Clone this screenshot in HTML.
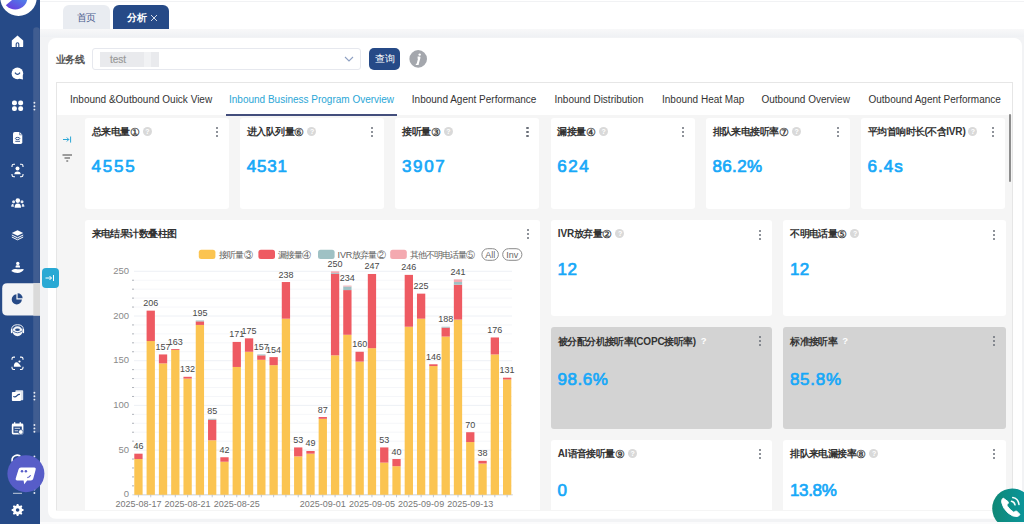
<!DOCTYPE html>
<html><head><meta charset="utf-8">
<style>
*{margin:0;padding:0;box-sizing:border-box}
html,body{width:1024px;height:524px;overflow:hidden;background:#f2f3f5;font-family:"Liberation Sans",sans-serif;position:relative}
.abs{position:absolute}
.card{position:absolute;border-radius:3px}
.ct{position:absolute;font-size:10px;letter-spacing:-0.55px;line-height:14px;font-weight:bold;color:#333;white-space:nowrap}
.num{position:absolute;font-size:17px;line-height:20px;font-weight:normal;-webkit-text-stroke:0.7px #17a8f8;color:#17a8f8;white-space:nowrap;letter-spacing:1.05px}
.qi{display:inline-block;width:9px;height:9px;border-radius:50%;background:#d9d9d9;color:#fff;font-size:7px;line-height:9px;text-align:center;vertical-align:1px;margin-left:3px;font-weight:bold}
.cd{font-size:11px;line-height:10px;font-weight:normal;-webkit-text-stroke:0.25px #333;margin-left:0px;letter-spacing:0;vertical-align:-1px}
.qw{display:inline-block;color:#fff;font-size:9.5px;margin-left:5px;font-weight:bold;vertical-align:0.5px}
.dots{position:absolute;width:3px;height:11px}
.dots i{position:absolute;left:0.1px;width:2.2px;height:2.2px;border-radius:50%}
.dots i:nth-child(1){top:0}.dots i:nth-child(2){top:4px}.dots i:nth-child(3){top:8px}
.q{position:absolute;width:9px;height:9px;border-radius:50%;color:#fff;font-size:7px;line-height:9px;text-align:center;font-weight:bold}
.tab{position:absolute;top:93px;font-size:10px;line-height:13px;color:#444;white-space:nowrap}
svg text{font-family:"Liberation Sans",sans-serif}
.ax{font-size:9.5px;fill:#8a8a8a}
.bl{font-size:9px;fill:#484848}
.dl{font-size:9px;fill:#777}
.lg{font-size:9px;fill:#606060;letter-spacing:-0.9px}
.lg2{font-size:9px;fill:#666}
</style></head><body>

<svg class="abs" style="left:0;top:0" width="40" height="524"><rect x="0" y="0" width="40" height="524" fill="#264a87"/><path d="M33.2 432.5 V30.6 A3.3 3.3 0 0 1 39.8 30.6 V432.5 Z" fill="#405d91"/><circle cx="18.5" cy="-2.3" r="18.2" fill="#fff"/><defs><linearGradient id="lg1" x1="0" y1="1" x2="1" y2="0"><stop offset="0" stop-color="#6b35dd"/><stop offset="1" stop-color="#4e86ea"/></linearGradient></defs><path d="M5.8 5.2 L13.2 -1 L27.3 -1 Q26.5 5.5 20 8.6 Q12.5 11.5 5.8 5.2 Z" fill="url(#lg1)"/><path d="M11.8 40.6 L17.5 35.6 L23.2 40.6 V46.2 Q23.2 47.1 22.3 47.1 H12.7 Q11.8 47.1 11.8 46.2 Z" fill="#ffffff"/><path d="M16.2 47.3 V44 A1.3 1.3 0 0 1 18.8 44 V47.3" fill="none" stroke="#264a87" stroke-width="1.1"/><circle cx="17.4" cy="73.4" r="5.8" fill="#ffffff"/><path d="M19.5 78.8 L23 79.5 L22.6 75.5 Z" fill="#ffffff"/><path d="M15 72.6 Q17.5 76.2 20 72.6" fill="none" stroke="#264a87" stroke-width="1.2"/><rect x="12" y="100.5" width="4.9" height="4.8" rx="2" fill="#ffffff"/><rect x="18.2" y="100.5" width="4.9" height="4.8" rx="2" fill="#ffffff"/><rect x="12" y="106.2" width="4.9" height="4.8" rx="2" fill="#ffffff"/><rect x="18.2" y="106.2" width="4.9" height="4.8" rx="2" fill="#ffffff"/><path d="M14.8 132 H19.6 L22.3 134.8 V142.3 Q22.3 144 20.6 144 H14.8 Q13 144 13 142.3 V133.8 Q13 132 14.8 132 Z" fill="#ffffff"/><path d="M19.6 132 V134.8 H22.3" fill="none" stroke="#264a87" stroke-width="0.6"/><ellipse cx="17.6" cy="138.5" rx="2.2" ry="1.1" fill="none" stroke="#264a87" stroke-width="0.9"/><path d="M15.3 141.3 H20" stroke="#264a87" stroke-width="0.9"/><path d="M12 167 V166 Q12 164.3 13.7 164.3 H15 M20 164.3 H21.3 Q23 164.3 23 166 V167 M23 174 V175 Q23 176.7 21.3 176.7 H20 M15 176.7 H13.7 Q12 176.7 12 175 V174" fill="none" stroke="#ffffff" stroke-width="1.1"/><circle cx="17.5" cy="168.6" r="2" fill="#ffffff"/><path d="M14.3 174.3 Q14.3 171.4 17.5 171.4 Q20.7 171.4 20.7 174.3 Z" fill="#ffffff"/><circle cx="17.8" cy="200.6" r="2.3" fill="#ffffff"/><path d="M14.6 207.8 Q14.6 203.6 17.8 203.6 Q21 203.6 21 207.8 Z" fill="#ffffff"/><circle cx="13.6" cy="201.8" r="1.5" fill="#ffffff" opacity="0.9"/><path d="M11.2 206.8 Q11.2 203.8 13.3 203.8 L14 206.8 Z" fill="#ffffff" opacity="0.9"/><circle cx="22" cy="201.8" r="1.5" fill="#ffffff" opacity="0.9"/><path d="M24.4 206.8 Q24.4 203.8 22.3 203.8 L21.6 206.8 Z" fill="#ffffff" opacity="0.9"/><path d="M11.8 233 L17.5 230.2 L23.2 233 L17.5 235.8 Z" fill="#ffffff"/><path d="M11.8 235 L17.5 237.8 L23.2 235 M11.8 237 L17.5 239.8 L23.2 237" fill="none" stroke="#ffffff" stroke-width="1"/><circle cx="17.8" cy="263.4" r="1.7" fill="#ffffff"/><path d="M15.6 267.6 V266.6 Q15.6 265.2 17 265.2 H18.6 Q20 265.2 20 266.6 V267.6 Z" fill="#ffffff"/><path d="M11.2 271 Q13 268.4 16 269 Q18.5 269.6 20.5 269.2 Q23 268.6 24 269.6 Q21.5 273 17.5 273 Q14 273 11.2 271 Z" fill="#ffffff"/><path d="M7.2 283.3 H40 V315.5 H7.2 Q2.2 315.5 2.2 310.5 V288.3 Q2.2 283.3 7.2 283.3 Z" fill="#f3f4f6"/><rect x="33.3" y="283.3" width="6.7" height="32.2" fill="#dadada"/><path d="M16.4 294.2 A5.1 5.1 0 1 0 21.9 299.6 H16.4 Z" fill="#264a87"/><path d="M17.6 293.3 A5 5 0 0 1 22.6 298.3 H17.6 Z" fill="#264a87"/><circle cx="17.5" cy="331.3" r="5" fill="#ffffff" opacity="0.95"/><ellipse cx="17.5" cy="329.8" rx="2.4" ry="1.3" fill="#264a87"/><path d="M13 331 Q17.5 334.5 22 331" fill="none" stroke="#264a87" stroke-width="0.8"/><path d="M11.6 333 V330 Q11.6 324.7 17.5 324.7 Q23.4 324.7 23.4 330 V333" fill="none" stroke="#ffffff" stroke-width="0.9"/><rect x="10.9" y="329" width="1.5" height="4.2" rx="0.7" fill="#ffffff"/><rect x="22.6" y="329" width="1.5" height="4.2" rx="0.7" fill="#ffffff"/><path d="M12 359.8 V358.8 Q12 357.1 13.7 357.1 H15 M20 357.1 H21.3 Q23 357.1 23 358.8 V359.8 M23 366.8 V367.8 Q23 369.5 21.3 369.5 H20 M15 369.5 H13.7 Q12 369.5 12 367.8 V366.8" fill="none" stroke="#ffffff" stroke-width="1.1"/><path d="M13.8 366.8 Q13.8 362.2 16.6 362.2 Q18.5 362.2 21.2 366.8 Z" fill="#ffffff"/><circle cx="19.5" cy="361.5" r="1.1" fill="#ffffff"/><rect x="15.4" y="390.2" width="7.8" height="10" rx="0.8" fill="#ffffff" opacity="0.85"/><rect x="11.9" y="392" width="9" height="9" rx="0.8" fill="#ffffff"/><path d="M13.3 396.4 Q15 397.8 17 395.6 Q18.5 394 20 394.4" fill="none" stroke="#264a87" stroke-width="1.2"/><rect x="11.8" y="423.6" width="11.6" height="10.8" rx="1.3" fill="#ffffff"/><rect x="13.4" y="426.5" width="8.4" height="6.3" fill="#264a87"/><path d="M14.6 428.3 H20 M14.6 430.8 H18" stroke="#ffffff" stroke-width="0.8"/><rect x="14" y="422.2" width="1.3" height="2" fill="#ffffff"/><rect x="19.6" y="422.2" width="1.3" height="2" fill="#ffffff"/><circle cx="20.8" cy="432" r="2.4" fill="#ffffff" stroke="#264a87" stroke-width="0.7"/><path d="M12.5 462 A5 5 0 0 1 21 457" fill="none" stroke="#ffffff" stroke-width="1.6"/><path d="M13 493.3 H22" stroke="#ffffff" stroke-width="0.9" opacity="0.8"/><polygon points="23.60,510.00 23.55,510.78 22.04,511.19 21.85,511.76 21.58,512.30 22.36,513.65 21.84,514.24 21.25,514.76 19.90,513.98 19.36,514.25 18.79,514.44 18.38,515.95 17.60,516.00 16.82,515.95 16.41,514.44 15.84,514.25 15.30,513.98 13.95,514.76 13.36,514.24 12.84,513.65 13.62,512.30 13.35,511.76 13.16,511.19 11.65,510.78 11.60,510.00 11.65,509.22 13.16,508.81 13.35,508.24 13.62,507.70 12.84,506.35 13.36,505.76 13.95,505.24 15.30,506.02 15.84,505.75 16.41,505.56 16.82,504.05 17.60,504.00 18.38,504.05 18.79,505.56 19.36,505.75 19.90,506.02 21.25,505.24 21.84,505.76 22.36,506.35 21.58,507.70 21.85,508.24 22.04,508.81 23.55,509.22" fill="#ffffff"/><circle cx="17.6" cy="510" r="1.8" fill="#264a87"/><circle cx="34.4" cy="102.8" r="0.95" fill="#e8ecf4"/><circle cx="34.4" cy="106.2" r="0.95" fill="#e8ecf4"/><circle cx="34.4" cy="109.6" r="0.95" fill="#e8ecf4"/><circle cx="34.4" cy="392.8" r="0.95" fill="#e8ecf4"/><circle cx="34.4" cy="396.2" r="0.95" fill="#e8ecf4"/><circle cx="34.4" cy="399.6" r="0.95" fill="#e8ecf4"/><circle cx="34.4" cy="425" r="0.95" fill="#e8ecf4"/><circle cx="34.4" cy="428.4" r="0.95" fill="#e8ecf4"/><circle cx="34.4" cy="431.8" r="0.95" fill="#e8ecf4"/><circle cx="34.4" cy="456.5" r="0.95" fill="#e8ecf4"/><circle cx="34.4" cy="489.5" r="0.95" fill="#e8ecf4"/><circle cx="34.4" cy="493" r="0.95" fill="#e8ecf4"/></svg>
<div class="abs" style="left:40px;top:0;width:984px;height:29.2px;background:#fff"></div>
<div class="abs" style="left:40px;top:1px;width:984px;height:1px;background:#f1f2f4"></div>
<div class="abs" style="left:63px;top:5.2px;width:46.5px;height:24px;background:#e9ecf1;border-radius:6px 6px 0 0"></div>
<div class="abs" style="left:77px;top:11.4px;color:#4d6190;font-size:10px;line-height:14px;letter-spacing:-1.2px">首页</div>
<div class="abs" style="left:113px;top:5.2px;width:56px;height:24px;background:#264a87;border-radius:6px 6px 0 0"></div>
<div class="abs" style="left:127px;top:10.8px;color:#fff;font-size:10px;line-height:14px;font-weight:bold;letter-spacing:-0.3px">分析</div>
<svg class="abs" style="left:150px;top:14px" width="8" height="8"><path d="M1 1 L7 7 M7 1 L1 7" stroke="#e8ecf4" stroke-width="0.9"/></svg>
<div class="abs" style="left:40px;top:29.2px;width:984px;height:8.3px;background:linear-gradient(180deg,#f8f8f9,#eff1f4)"></div>
<div class="abs" style="left:47.5px;top:37.5px;width:974px;height:481.5px;background:#fff;border-radius:8px"></div>
<div class="abs" style="left:55.6px;top:52.8px;font-size:10px;line-height:14px;font-weight:bold;color:#555;letter-spacing:-0.3px">业务线</div>
<div class="abs" style="left:92.3px;top:48.2px;width:269px;height:21.4px;border:1px solid #e6e8ee;border-radius:3px"></div>
<div class="abs" style="left:100px;top:52px;width:44px;height:14.5px;background:#e9eaed"></div>
<div class="abs" style="left:144px;top:52px;width:6.5px;height:14.5px;background:#f1f2f4"></div>
<div class="abs" style="left:150.5px;top:52px;width:8px;height:14.5px;background:#e9eaed"></div>
<div class="abs" style="left:110px;top:52.5px;font-size:10px;line-height:14px;color:#9a9a9a;-webkit-text-stroke:0.2px #9a9a9a">test</div>
<svg class="abs" style="left:344px;top:55px" width="10" height="8"><path d="M1 2 L5 6 L9 2" fill="none" stroke="#8ea0c2" stroke-width="1.1"/></svg>
<div class="abs" style="left:369.3px;top:48.2px;width:30.8px;height:21.4px;background:#264a87;border-radius:5px;color:#fff;font-size:10px;line-height:21px;text-align:center">查询</div>
<svg class="abs" style="left:409px;top:49.5px" width="19" height="19"><circle cx="9.2" cy="8.9" r="8.8" fill="#a4a7ad"/><path d="M8.6 7.6 H10.4 L8.6 14.2" fill="none" stroke="#fff" stroke-width="2.1" stroke-linejoin="round"/><path d="M6.8 14.4 H9.6" stroke="#fff" stroke-width="1.2"/><circle cx="10.7" cy="4.6" r="1.2" fill="#fff"/></svg>
<div class="abs" style="left:56px;top:82px;width:957px;height:428.5px;border:1px solid #e6e6e6;background:#f5f5f5"></div>
<div class="abs" style="left:57px;top:83px;width:955px;height:32px;background:#fff"></div>
<div class="tab" style="left:70px;color:#333">Inbound &amp;Outbound Ouick View</div>
<div class="tab" style="left:229px;color:#2aa6d6">Inbound Business Program Overview</div>
<div class="tab" style="left:411.8px;color:#333">Inbound Agent Performance</div>
<div class="tab" style="left:554.5px;color:#333">Inbound Distribution</div>
<div class="tab" style="left:662px;color:#333">Inbound Heat Map</div>
<div class="tab" style="left:761.5px;color:#333">Outbound Overview</div>
<div class="tab" style="left:868.5px;color:#333">Outbound Agent Performance</div>
<div class="abs" style="left:226px;top:114px;width:171px;height:2px;background:#434e7c"></div>
<svg class="abs" style="left:62px;top:134px" width="12" height="10"><path d="M1 5.5 H6.8 M4.8 3.5 L6.8 5.5 L4.8 7.5 M8.6 2.5 V8.6" fill="none" stroke="#2aa6d6" stroke-width="1"/></svg>
<svg class="abs" style="left:62px;top:154px" width="12" height="10"><path d="M0.5 1 H10 M2.5 4 H8 M4.3 7 H6.2" fill="none" stroke="#444" stroke-width="1.1"/></svg>
<div class="card" style="left:85.0px;top:117.6px;width:144px;height:91px;background:#fff"></div>
<div class="ct" style="left:91.8px;top:124.6px">总来电量<span class="cd">①</span><span class="qi">?</span></div>
<div class="num" style="left:91.6px;top:156.5px;letter-spacing:1.73px">4555</div>
<div class="dots" style="left:216.0px;top:127.1px;"><i style="background:#6a6f78"></i><i style="background:#6a6f78"></i><i style="background:#6a6f78"></i></div>
<div class="card" style="left:240.2px;top:117.6px;width:144px;height:91px;background:#fff"></div>
<div class="ct" style="left:247.0px;top:124.6px">进入队列量<span class="cd">⑥</span><span class="qi">?</span></div>
<div class="num" style="left:246.79999999999998px;top:156.5px;letter-spacing:0.77px">4531</div>
<div class="dots" style="left:371.2px;top:127.1px;"><i style="background:#6a6f78"></i><i style="background:#6a6f78"></i><i style="background:#6a6f78"></i></div>
<div class="card" style="left:395.4px;top:117.6px;width:144px;height:91px;background:#fff"></div>
<div class="ct" style="left:402.2px;top:124.6px">接听量<span class="cd">③</span><span class="qi">?</span></div>
<div class="num" style="left:402.0px;top:156.5px;letter-spacing:1.67px">3907</div>
<div class="dots" style="left:526.4px;top:127.1px;"><i style="background:#6a6f78"></i><i style="background:#6a6f78"></i><i style="background:#6a6f78"></i></div>
<div class="card" style="left:550.6px;top:117.6px;width:144px;height:91px;background:#fff"></div>
<div class="ct" style="left:557.4px;top:124.6px">漏接量<span class="cd">④</span><span class="qi">?</span></div>
<div class="num" style="left:557.2px;top:156.5px;letter-spacing:1.62px">624</div>
<div class="dots" style="left:681.6px;top:127.1px;"><i style="background:#6a6f78"></i><i style="background:#6a6f78"></i><i style="background:#6a6f78"></i></div>
<div class="card" style="left:705.8px;top:117.6px;width:144px;height:91px;background:#fff"></div>
<div class="ct" style="left:712.5999999999999px;top:124.6px">排队来电接听率<span class="cd">⑦</span><span class="qi">?</span></div>
<div class="num" style="left:712.4px;top:156.5px;letter-spacing:0.38px">86.2%</div>
<div class="dots" style="left:836.8px;top:127.1px;"><i style="background:#6a6f78"></i><i style="background:#6a6f78"></i><i style="background:#6a6f78"></i></div>
<div class="card" style="left:861.0px;top:117.6px;width:144px;height:91px;background:#fff"></div>
<div class="ct" style="left:867.8px;top:124.6px">平均首响时长(不含<span style="letter-spacing:-0.15px">IVR</span>)<span class="qi">?</span></div>
<div class="num" style="left:867.6px;top:156.5px;letter-spacing:1.0px">6.4s</div>
<div class="dots" style="left:992.0px;top:127.1px;"><i style="background:#6a6f78"></i><i style="background:#6a6f78"></i><i style="background:#6a6f78"></i></div>
<div class="card" style="left:85px;top:220px;width:455px;height:300px;background:#fff"></div>
<div class="ct" style="left:91.5px;top:227px">来电结果计数叠柱图</div>
<div class="dots" style="left:526.5px;top:229px;"><i style="background:#6a6f78"></i><i style="background:#6a6f78"></i><i style="background:#6a6f78"></i></div>
<svg class="abs" style="left:0;top:0" width="1024" height="524"><line x1="134" y1="494.80" x2="512" y2="494.80" stroke="#e9ecf2" stroke-width="0.8"/>
<text x="129" y="497.40" text-anchor="end" class="ax">0</text>
<line x1="134" y1="450.10" x2="512" y2="450.10" stroke="#e9ecf2" stroke-width="0.8"/>
<text x="129" y="452.70" text-anchor="end" class="ax">50</text>
<line x1="134" y1="405.40" x2="512" y2="405.40" stroke="#e9ecf2" stroke-width="0.8"/>
<text x="129" y="408.00" text-anchor="end" class="ax">100</text>
<line x1="134" y1="360.70" x2="512" y2="360.70" stroke="#e9ecf2" stroke-width="0.8"/>
<text x="129" y="363.30" text-anchor="end" class="ax">150</text>
<line x1="134" y1="316.00" x2="512" y2="316.00" stroke="#e9ecf2" stroke-width="0.8"/>
<text x="129" y="318.60" text-anchor="end" class="ax">200</text>
<line x1="134" y1="271.30" x2="512" y2="271.30" stroke="#e9ecf2" stroke-width="0.8"/>
<text x="129" y="273.90" text-anchor="end" class="ax">250</text>
<line x1="134" y1="485.86" x2="512" y2="485.86" stroke="#f3f4f7" stroke-width="0.8"/>
<line x1="134" y1="476.92" x2="512" y2="476.92" stroke="#f3f4f7" stroke-width="0.8"/>
<line x1="134" y1="467.98" x2="512" y2="467.98" stroke="#f3f4f7" stroke-width="0.8"/>
<line x1="134" y1="459.04" x2="512" y2="459.04" stroke="#f3f4f7" stroke-width="0.8"/>
<line x1="134" y1="441.16" x2="512" y2="441.16" stroke="#f3f4f7" stroke-width="0.8"/>
<line x1="134" y1="432.22" x2="512" y2="432.22" stroke="#f3f4f7" stroke-width="0.8"/>
<line x1="134" y1="423.28" x2="512" y2="423.28" stroke="#f3f4f7" stroke-width="0.8"/>
<line x1="134" y1="414.34" x2="512" y2="414.34" stroke="#f3f4f7" stroke-width="0.8"/>
<line x1="134" y1="396.46" x2="512" y2="396.46" stroke="#f3f4f7" stroke-width="0.8"/>
<line x1="134" y1="387.52" x2="512" y2="387.52" stroke="#f3f4f7" stroke-width="0.8"/>
<line x1="134" y1="378.58" x2="512" y2="378.58" stroke="#f3f4f7" stroke-width="0.8"/>
<line x1="134" y1="369.64" x2="512" y2="369.64" stroke="#f3f4f7" stroke-width="0.8"/>
<line x1="134" y1="351.76" x2="512" y2="351.76" stroke="#f3f4f7" stroke-width="0.8"/>
<line x1="134" y1="342.82" x2="512" y2="342.82" stroke="#f3f4f7" stroke-width="0.8"/>
<line x1="134" y1="333.88" x2="512" y2="333.88" stroke="#f3f4f7" stroke-width="0.8"/>
<line x1="134" y1="324.94" x2="512" y2="324.94" stroke="#f3f4f7" stroke-width="0.8"/>
<line x1="134" y1="307.06" x2="512" y2="307.06" stroke="#f3f4f7" stroke-width="0.8"/>
<line x1="134" y1="298.12" x2="512" y2="298.12" stroke="#f3f4f7" stroke-width="0.8"/>
<line x1="134" y1="289.18" x2="512" y2="289.18" stroke="#f3f4f7" stroke-width="0.8"/>
<line x1="134" y1="280.24" x2="512" y2="280.24" stroke="#f3f4f7" stroke-width="0.8"/>
<line x1="132" y1="485.86" x2="134" y2="485.86" stroke="#9aa0a8" stroke-width="0.8"/>
<line x1="132" y1="476.92" x2="134" y2="476.92" stroke="#9aa0a8" stroke-width="0.8"/>
<line x1="132" y1="467.98" x2="134" y2="467.98" stroke="#9aa0a8" stroke-width="0.8"/>
<line x1="132" y1="459.04" x2="134" y2="459.04" stroke="#9aa0a8" stroke-width="0.8"/>
<line x1="132" y1="441.16" x2="134" y2="441.16" stroke="#9aa0a8" stroke-width="0.8"/>
<line x1="132" y1="432.22" x2="134" y2="432.22" stroke="#9aa0a8" stroke-width="0.8"/>
<line x1="132" y1="423.28" x2="134" y2="423.28" stroke="#9aa0a8" stroke-width="0.8"/>
<line x1="132" y1="414.34" x2="134" y2="414.34" stroke="#9aa0a8" stroke-width="0.8"/>
<line x1="132" y1="396.46" x2="134" y2="396.46" stroke="#9aa0a8" stroke-width="0.8"/>
<line x1="132" y1="387.52" x2="134" y2="387.52" stroke="#9aa0a8" stroke-width="0.8"/>
<line x1="132" y1="378.58" x2="134" y2="378.58" stroke="#9aa0a8" stroke-width="0.8"/>
<line x1="132" y1="369.64" x2="134" y2="369.64" stroke="#9aa0a8" stroke-width="0.8"/>
<line x1="132" y1="351.76" x2="134" y2="351.76" stroke="#9aa0a8" stroke-width="0.8"/>
<line x1="132" y1="342.82" x2="134" y2="342.82" stroke="#9aa0a8" stroke-width="0.8"/>
<line x1="132" y1="333.88" x2="134" y2="333.88" stroke="#9aa0a8" stroke-width="0.8"/>
<line x1="132" y1="324.94" x2="134" y2="324.94" stroke="#9aa0a8" stroke-width="0.8"/>
<line x1="132" y1="307.06" x2="134" y2="307.06" stroke="#9aa0a8" stroke-width="0.8"/>
<line x1="132" y1="298.12" x2="134" y2="298.12" stroke="#9aa0a8" stroke-width="0.8"/>
<line x1="132" y1="289.18" x2="134" y2="289.18" stroke="#9aa0a8" stroke-width="0.8"/>
<line x1="132" y1="280.24" x2="134" y2="280.24" stroke="#9aa0a8" stroke-width="0.8"/>
<line x1="132.3" y1="494.80" x2="513" y2="494.80" stroke="#c9ced6" stroke-width="0.8"/>
<rect x="134.30" y="459.04" width="8.3" height="35.76" fill="#fbc451"/>
<rect x="134.30" y="453.68" width="8.3" height="5.36" fill="#ee5a62"/>
<text x="138.45" y="449.18" text-anchor="middle" class="bl">46</text>
<line x1="138.45" y1="494.80" x2="138.45" y2="497.30" stroke="#aab0b8" stroke-width="0.7"/>
<rect x="146.59" y="341.03" width="8.3" height="153.77" fill="#fbc451"/>
<rect x="146.59" y="310.64" width="8.3" height="30.40" fill="#ee5a62"/>
<text x="150.74" y="306.14" text-anchor="middle" class="bl">206</text>
<line x1="150.74" y1="494.80" x2="150.74" y2="497.30" stroke="#aab0b8" stroke-width="0.7"/>
<rect x="158.88" y="363.38" width="8.3" height="131.42" fill="#fbc451"/>
<rect x="158.88" y="354.44" width="8.3" height="8.94" fill="#ee5a62"/>
<text x="163.03" y="349.94" text-anchor="middle" class="bl">157</text>
<line x1="163.03" y1="494.80" x2="163.03" y2="497.30" stroke="#aab0b8" stroke-width="0.7"/>
<rect x="171.16" y="349.97" width="8.3" height="144.83" fill="#fbc451"/>
<rect x="171.16" y="349.08" width="8.3" height="0.89" fill="#ee5a62"/>
<text x="175.31" y="344.58" text-anchor="middle" class="bl">163</text>
<line x1="175.31" y1="494.80" x2="175.31" y2="497.30" stroke="#aab0b8" stroke-width="0.7"/>
<rect x="183.46" y="378.58" width="8.3" height="116.22" fill="#fbc451"/>
<rect x="183.46" y="376.79" width="8.3" height="1.79" fill="#ee5a62"/>
<text x="187.61" y="372.29" text-anchor="middle" class="bl">132</text>
<line x1="187.61" y1="494.80" x2="187.61" y2="497.30" stroke="#aab0b8" stroke-width="0.7"/>
<rect x="195.75" y="324.94" width="8.3" height="169.86" fill="#fbc451"/>
<rect x="195.75" y="321.36" width="8.3" height="3.58" fill="#ee5a62"/>
<rect x="195.75" y="320.47" width="8.3" height="0.89" fill="#9fc1c4"/>
<text x="199.90" y="315.97" text-anchor="middle" class="bl">195</text>
<line x1="199.90" y1="494.80" x2="199.90" y2="497.30" stroke="#aab0b8" stroke-width="0.7"/>
<rect x="208.03" y="440.27" width="8.3" height="54.53" fill="#fbc451"/>
<rect x="208.03" y="419.70" width="8.3" height="20.56" fill="#ee5a62"/>
<rect x="208.03" y="418.81" width="8.3" height="0.89" fill="#9fc1c4"/>
<text x="212.19" y="414.31" text-anchor="middle" class="bl">85</text>
<line x1="212.19" y1="494.80" x2="212.19" y2="497.30" stroke="#aab0b8" stroke-width="0.7"/>
<rect x="220.33" y="461.72" width="8.3" height="33.08" fill="#fbc451"/>
<rect x="220.33" y="457.25" width="8.3" height="4.47" fill="#ee5a62"/>
<text x="224.48" y="452.75" text-anchor="middle" class="bl">42</text>
<line x1="224.48" y1="494.80" x2="224.48" y2="497.30" stroke="#aab0b8" stroke-width="0.7"/>
<rect x="232.61" y="366.96" width="8.3" height="127.84" fill="#fbc451"/>
<rect x="232.61" y="341.93" width="8.3" height="25.03" fill="#ee5a62"/>
<text x="236.76" y="337.43" text-anchor="middle" class="bl">171</text>
<line x1="236.76" y1="494.80" x2="236.76" y2="497.30" stroke="#aab0b8" stroke-width="0.7"/>
<rect x="244.91" y="351.76" width="8.3" height="143.04" fill="#fbc451"/>
<rect x="244.91" y="338.35" width="8.3" height="13.41" fill="#ee5a62"/>
<text x="249.06" y="333.85" text-anchor="middle" class="bl">175</text>
<line x1="249.06" y1="494.80" x2="249.06" y2="497.30" stroke="#aab0b8" stroke-width="0.7"/>
<rect x="257.20" y="359.81" width="8.3" height="134.99" fill="#fbc451"/>
<rect x="257.20" y="355.34" width="8.3" height="4.47" fill="#ee5a62"/>
<rect x="257.20" y="354.44" width="8.3" height="0.89" fill="#9fc1c4"/>
<text x="261.35" y="349.94" text-anchor="middle" class="bl">157</text>
<line x1="261.35" y1="494.80" x2="261.35" y2="497.30" stroke="#aab0b8" stroke-width="0.7"/>
<rect x="269.49" y="365.17" width="8.3" height="129.63" fill="#fbc451"/>
<rect x="269.49" y="357.12" width="8.3" height="8.05" fill="#ee5a62"/>
<text x="273.63" y="352.62" text-anchor="middle" class="bl">154</text>
<line x1="273.63" y1="494.80" x2="273.63" y2="497.30" stroke="#aab0b8" stroke-width="0.7"/>
<rect x="281.78" y="318.68" width="8.3" height="176.12" fill="#fbc451"/>
<rect x="281.78" y="282.03" width="8.3" height="36.65" fill="#ee5a62"/>
<text x="285.93" y="277.53" text-anchor="middle" class="bl">238</text>
<line x1="285.93" y1="494.80" x2="285.93" y2="497.30" stroke="#aab0b8" stroke-width="0.7"/>
<rect x="294.07" y="456.36" width="8.3" height="38.44" fill="#fbc451"/>
<rect x="294.07" y="447.42" width="8.3" height="8.94" fill="#ee5a62"/>
<text x="298.22" y="442.92" text-anchor="middle" class="bl">53</text>
<line x1="298.22" y1="494.80" x2="298.22" y2="497.30" stroke="#aab0b8" stroke-width="0.7"/>
<rect x="306.36" y="453.68" width="8.3" height="41.12" fill="#fbc451"/>
<rect x="306.36" y="450.99" width="8.3" height="2.68" fill="#ee5a62"/>
<text x="310.50" y="446.49" text-anchor="middle" class="bl">49</text>
<line x1="310.50" y1="494.80" x2="310.50" y2="497.30" stroke="#aab0b8" stroke-width="0.7"/>
<rect x="318.64" y="418.81" width="8.3" height="75.99" fill="#fbc451"/>
<rect x="318.64" y="417.02" width="8.3" height="1.79" fill="#ee5a62"/>
<text x="322.79" y="412.52" text-anchor="middle" class="bl">87</text>
<line x1="322.79" y1="494.80" x2="322.79" y2="497.30" stroke="#aab0b8" stroke-width="0.7"/>
<rect x="330.94" y="355.34" width="8.3" height="139.46" fill="#fbc451"/>
<rect x="330.94" y="273.98" width="8.3" height="81.35" fill="#ee5a62"/>
<rect x="330.94" y="273.09" width="8.3" height="0.89" fill="#9fc1c4"/>
<rect x="330.94" y="271.30" width="8.3" height="1.79" fill="#f4a9b0"/>
<text x="335.09" y="266.80" text-anchor="middle" class="bl">250</text>
<line x1="335.09" y1="494.80" x2="335.09" y2="497.30" stroke="#aab0b8" stroke-width="0.7"/>
<rect x="343.23" y="334.77" width="8.3" height="160.03" fill="#fbc451"/>
<rect x="343.23" y="290.07" width="8.3" height="44.70" fill="#ee5a62"/>
<rect x="343.23" y="286.50" width="8.3" height="3.58" fill="#9fc1c4"/>
<rect x="343.23" y="285.60" width="8.3" height="0.89" fill="#f4a9b0"/>
<text x="347.38" y="281.10" text-anchor="middle" class="bl">234</text>
<line x1="347.38" y1="494.80" x2="347.38" y2="497.30" stroke="#aab0b8" stroke-width="0.7"/>
<rect x="355.51" y="361.59" width="8.3" height="133.21" fill="#fbc451"/>
<rect x="355.51" y="351.76" width="8.3" height="9.83" fill="#ee5a62"/>
<text x="359.66" y="347.26" text-anchor="middle" class="bl">160</text>
<line x1="359.66" y1="494.80" x2="359.66" y2="497.30" stroke="#aab0b8" stroke-width="0.7"/>
<rect x="367.81" y="348.18" width="8.3" height="146.62" fill="#fbc451"/>
<rect x="367.81" y="273.98" width="8.3" height="74.20" fill="#ee5a62"/>
<text x="371.95" y="269.48" text-anchor="middle" class="bl">247</text>
<line x1="371.95" y1="494.80" x2="371.95" y2="497.30" stroke="#aab0b8" stroke-width="0.7"/>
<rect x="380.10" y="462.62" width="8.3" height="32.18" fill="#fbc451"/>
<rect x="380.10" y="447.42" width="8.3" height="15.20" fill="#ee5a62"/>
<text x="384.25" y="442.92" text-anchor="middle" class="bl">53</text>
<line x1="384.25" y1="494.80" x2="384.25" y2="497.30" stroke="#aab0b8" stroke-width="0.7"/>
<rect x="392.38" y="466.19" width="8.3" height="28.61" fill="#fbc451"/>
<rect x="392.38" y="459.04" width="8.3" height="7.15" fill="#ee5a62"/>
<text x="396.53" y="454.54" text-anchor="middle" class="bl">40</text>
<line x1="396.53" y1="494.80" x2="396.53" y2="497.30" stroke="#aab0b8" stroke-width="0.7"/>
<rect x="404.68" y="326.73" width="8.3" height="168.07" fill="#fbc451"/>
<rect x="404.68" y="274.88" width="8.3" height="51.85" fill="#ee5a62"/>
<text x="408.82" y="270.38" text-anchor="middle" class="bl">246</text>
<line x1="408.82" y1="494.80" x2="408.82" y2="497.30" stroke="#aab0b8" stroke-width="0.7"/>
<rect x="416.97" y="318.68" width="8.3" height="176.12" fill="#fbc451"/>
<rect x="416.97" y="293.65" width="8.3" height="25.03" fill="#ee5a62"/>
<text x="421.12" y="289.15" text-anchor="middle" class="bl">225</text>
<line x1="421.12" y1="494.80" x2="421.12" y2="497.30" stroke="#aab0b8" stroke-width="0.7"/>
<rect x="429.25" y="366.06" width="8.3" height="128.74" fill="#fbc451"/>
<rect x="429.25" y="364.28" width="8.3" height="1.79" fill="#ee5a62"/>
<text x="433.40" y="359.78" text-anchor="middle" class="bl">146</text>
<line x1="433.40" y1="494.80" x2="433.40" y2="497.30" stroke="#aab0b8" stroke-width="0.7"/>
<rect x="441.55" y="336.56" width="8.3" height="158.24" fill="#fbc451"/>
<rect x="441.55" y="327.62" width="8.3" height="8.94" fill="#ee5a62"/>
<rect x="441.55" y="326.73" width="8.3" height="0.89" fill="#9fc1c4"/>
<text x="445.69" y="322.23" text-anchor="middle" class="bl">188</text>
<line x1="445.69" y1="494.80" x2="445.69" y2="497.30" stroke="#aab0b8" stroke-width="0.7"/>
<rect x="453.84" y="319.58" width="8.3" height="175.22" fill="#fbc451"/>
<rect x="453.84" y="284.71" width="8.3" height="34.87" fill="#ee5a62"/>
<rect x="453.84" y="282.03" width="8.3" height="2.68" fill="#9fc1c4"/>
<rect x="453.84" y="279.35" width="8.3" height="2.68" fill="#f4a9b0"/>
<text x="457.99" y="274.85" text-anchor="middle" class="bl">241</text>
<line x1="457.99" y1="494.80" x2="457.99" y2="497.30" stroke="#aab0b8" stroke-width="0.7"/>
<rect x="466.12" y="442.05" width="8.3" height="52.75" fill="#fbc451"/>
<rect x="466.12" y="432.22" width="8.3" height="9.83" fill="#ee5a62"/>
<text x="470.27" y="427.72" text-anchor="middle" class="bl">70</text>
<line x1="470.27" y1="494.80" x2="470.27" y2="497.30" stroke="#aab0b8" stroke-width="0.7"/>
<rect x="478.42" y="463.51" width="8.3" height="31.29" fill="#fbc451"/>
<rect x="478.42" y="460.83" width="8.3" height="2.68" fill="#ee5a62"/>
<text x="482.56" y="456.33" text-anchor="middle" class="bl">38</text>
<line x1="482.56" y1="494.80" x2="482.56" y2="497.30" stroke="#aab0b8" stroke-width="0.7"/>
<rect x="490.70" y="354.44" width="8.3" height="140.36" fill="#fbc451"/>
<rect x="490.70" y="337.46" width="8.3" height="16.99" fill="#ee5a62"/>
<text x="494.85" y="332.96" text-anchor="middle" class="bl">176</text>
<line x1="494.85" y1="494.80" x2="494.85" y2="497.30" stroke="#aab0b8" stroke-width="0.7"/>
<rect x="503.00" y="379.47" width="8.3" height="115.33" fill="#fbc451"/>
<rect x="503.00" y="377.69" width="8.3" height="1.79" fill="#ee5a62"/>
<text x="507.14" y="373.19" text-anchor="middle" class="bl">131</text>
<line x1="507.14" y1="494.80" x2="507.14" y2="497.30" stroke="#aab0b8" stroke-width="0.7"/>
<text x="138.45" y="506.5" text-anchor="middle" class="dl">2025-08-17</text>
<text x="187.61" y="506.5" text-anchor="middle" class="dl">2025-08-21</text>
<text x="236.76" y="506.5" text-anchor="middle" class="dl">2025-08-25</text>
<text x="322.79" y="506.5" text-anchor="middle" class="dl">2025-09-01</text>
<text x="371.95" y="506.5" text-anchor="middle" class="dl">2025-09-05</text>
<text x="421.12" y="506.5" text-anchor="middle" class="dl">2025-09-09</text>
<text x="470.27" y="506.5" text-anchor="middle" class="dl">2025-09-13</text>
<rect x="198.8" y="249.8" width="16.6" height="9.3" rx="2.5" fill="#fbc451"/>
<text x="219.3" y="258" class="lg">接听量③</text>
<rect x="258.4" y="249.8" width="16.6" height="9.3" rx="2.5" fill="#ee5a62"/>
<text x="278" y="258" class="lg">漏接量④</text>
<rect x="318" y="249.8" width="16.6" height="9.3" rx="2.5" fill="#9fc1c4"/>
<text x="337.5" y="258" class="lg"><tspan style="letter-spacing:-0.1px">IVR</tspan>放弃量②</text>
<rect x="390.2" y="249.8" width="16.6" height="9.3" rx="2.5" fill="#f4a9b0"/>
<text x="409.8" y="258" class="lg">其他不明电话量⑤</text>
<rect x="481.9" y="248.7" width="16.5" height="11.6" rx="5.8" fill="none" stroke="#8a8a8a" stroke-width="1"/>
<text x="490.2" y="257.6" text-anchor="middle" class="lg2">All</text>
<rect x="502.7" y="248.7" width="19.2" height="11.6" rx="5.8" fill="none" stroke="#8a8a8a" stroke-width="1"/>
<text x="512.3" y="257.6" text-anchor="middle" class="lg2">Inv</text></svg>
<div class="card" style="left:551px;top:220px;width:221.2px;height:95.6px;background:#fff"></div>
<div class="ct" style="left:557.8px;top:227px"><span style="letter-spacing:-0.15px">IVR</span>放弃量<span class="cd">②</span><span class="qi">?</span></div>
<div class="num" style="left:557.6px;top:260.3px;letter-spacing:0.5px">12</div>
<div class="dots" style="left:759.2px;top:229.5px;"><i style="background:#6a6f78"></i><i style="background:#6a6f78"></i><i style="background:#6a6f78"></i></div>
<div class="card" style="left:783.3px;top:220px;width:222.7px;height:95.6px;background:#fff"></div>
<div class="ct" style="left:790.0999999999999px;top:227px">不明电话量<span class="cd">⑤</span><span class="qi">?</span></div>
<div class="num" style="left:789.9px;top:260.3px;letter-spacing:0.5px">12</div>
<div class="dots" style="left:993.0px;top:229.5px;"><i style="background:#6a6f78"></i><i style="background:#6a6f78"></i><i style="background:#6a6f78"></i></div>
<div class="card" style="left:551px;top:326.7px;width:221.2px;height:102px;background:#d3d3d3"></div>
<div class="ct" style="left:557.8px;top:333.7px">被分配分机接听率(<span style="letter-spacing:-0.15px">COPC</span>接听率)<span class="qw">?</span></div>
<div class="num" style="left:557.6px;top:369.59999999999997px;letter-spacing:0.5px">98.6%</div>
<div class="dots" style="left:759.2px;top:336.2px;"><i style="background:#6a6f78"></i><i style="background:#6a6f78"></i><i style="background:#6a6f78"></i></div>
<div class="card" style="left:783.3px;top:326.7px;width:222.7px;height:102px;background:#d3d3d3"></div>
<div class="ct" style="left:790.0999999999999px;top:333.7px">标准接听率<span class="qw">?</span></div>
<div class="num" style="left:789.9px;top:369.59999999999997px;letter-spacing:0.75px">85.8%</div>
<div class="dots" style="left:993.0px;top:336.2px;"><i style="background:#6a6f78"></i><i style="background:#6a6f78"></i><i style="background:#6a6f78"></i></div>
<div class="card" style="left:551px;top:439.8px;width:221.2px;height:90px;background:#fff"></div>
<div class="ct" style="left:557.8px;top:446.8px"><span style="letter-spacing:-0.15px">AI</span>语音接听量<span class="cd">⑨</span><span class="qi">?</span></div>
<div class="num" style="left:557.6px;top:480.7px;letter-spacing:1.0px">0</div>
<div class="dots" style="left:759.2px;top:449.3px;"><i style="background:#6a6f78"></i><i style="background:#6a6f78"></i><i style="background:#6a6f78"></i></div>
<div class="card" style="left:783.3px;top:439.8px;width:222.7px;height:90px;background:#fff"></div>
<div class="ct" style="left:790.0999999999999px;top:446.8px">排队来电漏接率<span class="cd">⑧</span><span class="qi">?</span></div>
<div class="num" style="left:789.9px;top:480.7px;letter-spacing:-0.3px">13.8%</div>
<div class="dots" style="left:993.0px;top:449.3px;"><i style="background:#6a6f78"></i><i style="background:#6a6f78"></i><i style="background:#6a6f78"></i></div>
<div class="abs" style="left:40px;top:510.5px;width:984px;height:14px;background:#f2f3f5"></div>
<div class="abs" style="left:56.5px;top:509.5px;width:956px;height:1px;background:#ebebeb"></div>
<div class="abs" style="left:47.5px;top:500px;width:974px;height:18.7px;background:#fff;border-radius:0 0 8px 8px;clip-path:inset(10.5px 0 0 0)"></div>
<div class="abs" style="left:1009px;top:114px;width:2.2px;height:68px;background:#8d8d8d;border-radius:1px"></div>
<div class="abs" style="left:42px;top:268px;width:17px;height:20px;background:#29a9d4;border-radius:4px"></div>
<svg class="abs" style="left:44px;top:273px" width="12" height="10"><path d="M1.5 5 H7.5 M5.5 3 L7.5 5 L5.5 7 M9.5 2 V8" fill="none" stroke="#fff" stroke-width="1"/></svg>
<svg class="abs" style="left:0;top:440px" width="50" height="60"><circle cx="25.9" cy="33.7" r="18.5" fill="#575dc8"/><path d="M21 27.5 H34.3 Q36.3 27.5 35.7 29.5 L33.3 38.6 Q32.8 40.5 30.8 40.5 H27.2 L24.2 44.2 L23.6 40.5 H17.2 Q15.2 40.5 15.7 38.6 L18.5 29.5 Q19 27.5 21 27.5 Z" fill="#fff"/><circle cx="22" cy="31.3" r="1.25" fill="#575dc8"/><circle cx="25.9" cy="31.3" r="1.25" fill="#575dc8"/><path d="M27.3 37.6 Q29.6 37.4 30.6 35.3" fill="none" stroke="#575dc8" stroke-width="1.1"/></svg>
<svg class="abs" style="left:980px;top:480px" width="44" height="44"><defs><linearGradient id="pg" x1="0" x2="1" y1="0" y2="0"><stop offset="0" stop-color="#0f8876"/><stop offset="1" stop-color="#0a98a2"/></linearGradient></defs><circle cx="32.2" cy="28.5" r="20" fill="url(#pg)"/><g transform="translate(30.85 27.3) scale(1.17) translate(-30.85 -27.9)"><path d="M24.3 20 Q22.6 21.2 23 23.8 Q24 28.8 28.5 32.8 Q32.8 36.3 36.2 35.8 Q38 35.4 38.7 34 L36.1 31.4 Q35.3 30.8 34.5 31.4 L33.4 32.2 Q30.5 30.5 28.3 27.5 Q27.2 26 27.7 25.5 L28.6 24.5 Q29 23.7 28.4 23 Z" fill="#fff" stroke="#fff" stroke-width="0.8" stroke-linejoin="round"/><path d="M31.4 22.8 Q33.8 23.3 34.4 25.8 M32.5 19.6 Q37.2 20.4 37.8 25.5" fill="none" stroke="#fff" stroke-width="1.3" stroke-linecap="round"/></g></svg>
<div class="abs" style="left:40px;top:522.3px;width:984px;height:2px;background:#fbfbfc"></div>
</body></html>
